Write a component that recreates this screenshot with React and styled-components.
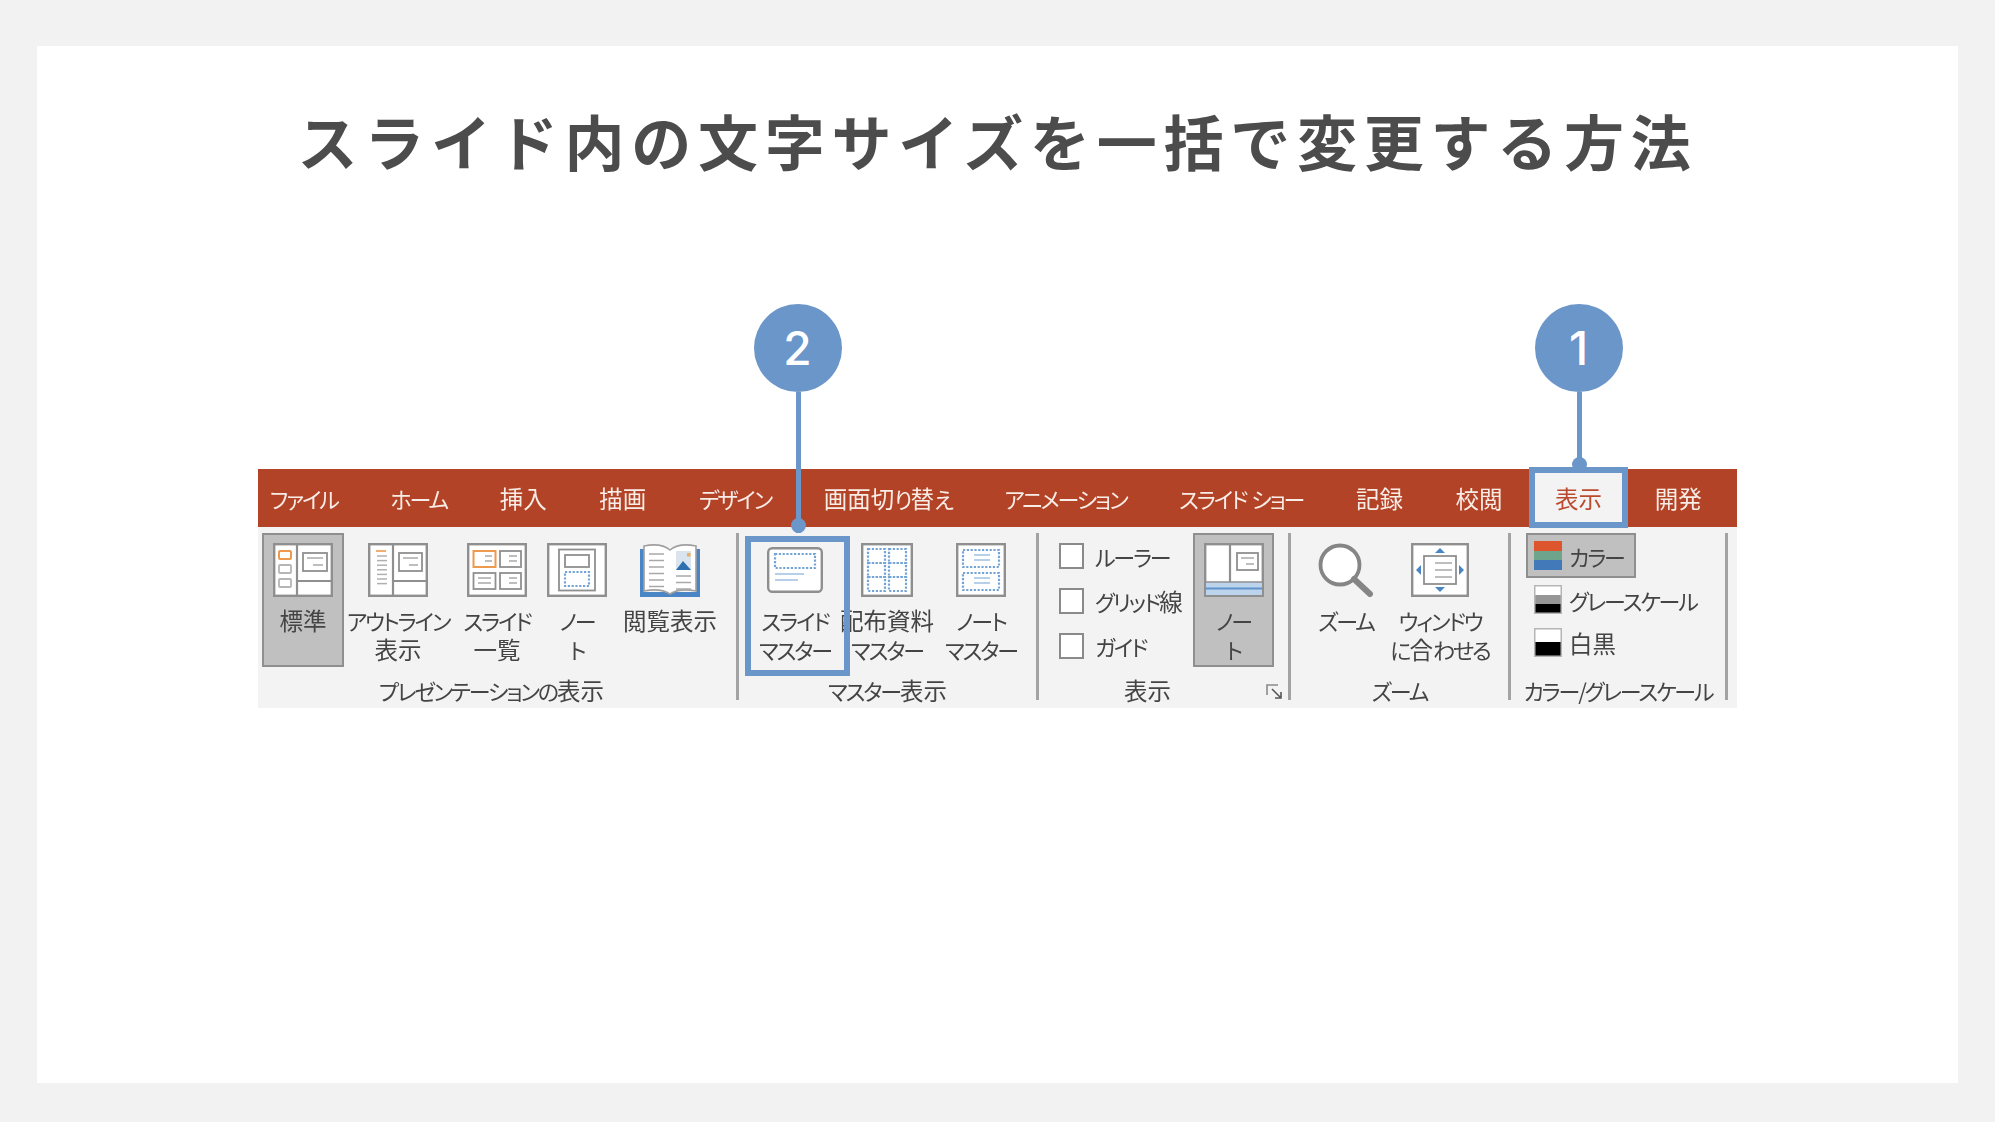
import React from "react";
import styled, { createGlobalStyle, css } from "styled-components";

const BLUE = "#6b96c9";
const GRAY = "#8f8f8f";
const DOT = "#74a4d6";

const GlobalStyle = createGlobalStyle`
  html, body { margin: 0; padding: 0; background: #f2f2f2; }
  body { font-family: "Noto Sans CJK JP", "Noto Sans", sans-serif; }
`;

const soft = css`
  filter: blur(0.45px);
`;

const Page = styled.div`
  box-sizing: border-box;
  height: 1122px;
  padding: 46px 37px 39px;
`;

const Slide = styled.div`
  height: 100%;
  background: #fff;
  padding-top: 1px;
  box-sizing: border-box;
`;

const Title = styled.h1`
  margin: 47px 0 0;
  height: 95px;
  line-height: 92px;
  text-align: center;
  font-size: 60px;
  font-weight: 700;
  letter-spacing: 6.75px;
  color: #4c4c4c;
  ${soft}
`;

const Ribbon = styled.div`
  width: 1479px;
  margin: 280px 0 0 221px;
  font-size: 22px;
  letter-spacing: -2.1px;
  color: #444;
  font-feature-settings: "palt";
`;

/* kanji run: the ribbon's kana are condensed, its kanji are not */
const Kanji = styled.span`
  font-size: 23.5px;
  letter-spacing: 0;
`;

const Jp = ({ children }) =>
  children.split(/([\u4e00-\u9fff]+)/).map((part, i) => (i % 2 ? <Kanji key={i}>{part}</Kanji> : part));

const TabBar = styled.div`
  display: flex;
  height: 58px;
  background: #b34326;
`;

const Tab = styled.div`
  position: relative;
  display: flex;
  align-items: center;
  padding: 0 26.3px;
  white-space: pre;
  word-spacing: 2px;
  color: ${(p) => (p.$active ? "#bb4a2e" : "#f8ece7")};
  background: ${(p) => (p.$active ? "#f3f3f3" : "transparent")};
  &:first-child { padding-left: 12px; }
`;

const TabText = styled.span`
  ${soft}
`;

const Body = styled.div`
  display: flex;
  height: 181px;
  background: #f3f3f3;
  padding-top: 6px;
  box-sizing: border-box;
`;

const Group = styled.section`
  position: relative;
  box-sizing: border-box;
  width: ${(p) => p.$w}px;
  height: 167px;
  padding-left: ${(p) => p.$inset}px;
  border-right: 3px solid #a3a3a3;
  display: flex;
  flex-direction: column;
`;

const Row = styled.div`
  display: flex;
  height: 134px;
`;

const Caption = styled.div`
  margin-top: auto;
  margin-bottom: -4px;
  margin-left: -${(p) => p.$inset || 0}px;
  padding-right: ${(p) => p.$shift || 0}px;
  height: 26px;
  line-height: 24px;
  text-align: center;
  white-space: nowrap;
  ${soft}
`;

const Launcher = styled.svg`
  position: absolute;
  right: 5px;
  bottom: 0;
  width: 17px;
  height: 16px;
`;

const Button = styled.div`
  position: relative;
  box-sizing: border-box;
  width: ${(p) => p.$w}px;
  height: 134px;
  padding-top: 10px;
  display: flex;
  flex-direction: column;
  align-items: center;
  ${(p) =>
    p.$on &&
    css`
      background: #c0c0c0;
      box-shadow: inset 0 0 0 2px ${GRAY};
    `}
`;

const Glyph = styled.svg`
  display: block;
  width: ${(p) => p.$w || 60}px;
  height: 54px;
  flex: none;
  ${soft}
`;

const Label = styled.div`
  margin-top: 9px;
  line-height: 29px;
  text-align: center;
  white-space: nowrap;
  ${soft}
`;

const Line = styled.div``;

const ChecksColumn = styled.div`
  box-sizing: border-box;
  width: 154px;
  padding: 0 0 0 20px;
`;

const Check = styled.div`
  display: flex;
  align-items: center;
  gap: 11px;
  height: 45px;
  white-space: nowrap;
`;

const Box = styled.span`
  box-sizing: border-box;
  width: 25px;
  height: 26px;
  background: #fff;
  border: 2px solid #8a8a8a;
`;

const OptionText = styled.span`
  ${soft}
`;

const ColorOption = styled.div`
  box-sizing: border-box;
  display: flex;
  align-items: center;
  gap: 7px;
  height: ${(p) => (p.$on ? 45 : 43)}px;
  width: ${(p) => (p.$on ? "110px" : "auto")};
  padding-left: 8px;
  white-space: nowrap;
  ${(p) =>
    p.$on &&
    css`
      background: #c0c0c0;
      box-shadow: inset 0 0 0 2px ${GRAY};
    `}
`;

const Swatch = styled.span`
  width: 28px;
  height: 29px;
  flex: none;
  background: ${(p) => p.$fill};
  ${(p) => p.$edged && "box-shadow: inset 0 0 0 1.5px #b5b5b5;"}
  ${soft}
`;

const Mark = styled.div`
  position: absolute;
  box-sizing: border-box;
  z-index: 2;
  top: ${(p) => p.$top}px;
  bottom: ${(p) => p.$bottom}px;
  left: ${(p) => p.$left}px;
  right: ${(p) => p.$right}px;
  border: 6px solid ${BLUE};
`;

const Pin = styled.div`
  position: absolute;
  left: 50%;
  bottom: calc(100% + ${(p) => p.$lift}px);
  transform: translateX(-50%);
  width: 88px;
  height: ${(p) => 88 + p.$stem}px;
  display: flex;
  flex-direction: column;
  align-items: center;
`;

const Bubble = styled.div`
  flex: none;
  width: 88px;
  height: 88px;
  border-radius: 50%;
  background: ${BLUE};
  color: #fff;
  display: flex;
  align-items: center;
  justify-content: center;
  letter-spacing: 0;
  font: 500 46px/1 Inter, "Noto Sans", sans-serif;
`;

const Stem = styled.div`
  flex: 1;
  width: 5px;
  margin-left: 2px;
  background: ${BLUE};
`;

const PinDot = styled.div`
  position: absolute;
  left: 37px;
  bottom: 0;
  width: 15px;
  height: 15px;
  border-radius: 50%;
  background: ${BLUE};
`;

const Callout = ({ n, stem, lift }) => (
  <Pin $stem={stem} $lift={lift}>
    <Bubble>{n}</Bubble>
    <Stem />
    <PinDot />
  </Pin>
);

const Shell = ({ children, w = 60, h = 54, y = 0, radius = 0 }) => (
  <Glyph $w={w} viewBox={`0 0 ${w} 54`}>
    <rect x="1.2" y={y + 1.2} width={w - 2.4} height={h - 2.4} rx={radius} fill="#fff" stroke={GRAY} strokeWidth="2.4" />
    {children}
  </Glyph>
);

const Lines = ({ x, y, w, n, gap = 4, color = "#a8a8a8" }) => (
  <g stroke={color} strokeWidth="1.5">
    {Array.from({ length: n }, (_, i) => (
      <line key={i} x1={x} x2={x + w} y1={y + i * gap} y2={y + i * gap} />
    ))}
  </g>
);

const Mini = ({ x, y, w, h, color = GRAY }) => (
  <rect x={x} y={y} width={w} height={h} fill="#fff" stroke={color} strokeWidth="1.8" />
);

const Dotted = ({ x, y, w, h }) => (
  <rect x={x} y={y} width={w} height={h} fill="none" stroke={DOT} strokeWidth="2.2" strokeDasharray="2.2 1.6" />
);

const NormalIcon = () => (
  <Shell>
    <path d="M24 1v52M24 38h36" stroke={GRAY} strokeWidth="2.2" />
    <rect x="6" y="8" width="12" height="8" rx="1" fill="#fff" stroke="#ed9a4f" strokeWidth="2" />
    <rect x="6" y="22" width="12" height="8" rx="1" fill="#fff" stroke="#b5b5b5" strokeWidth="1.8" />
    <rect x="6" y="36" width="12" height="8" rx="1" fill="#fff" stroke="#b5b5b5" strokeWidth="1.8" />
    <Mini x="30" y="10" w="24" h="18" />
    <Lines x={34} y={15} w={16} n={1} />
    <Lines x={40} y={22} w={10} n={1} />
  </Shell>
);

const OutlineIcon = () => (
  <Shell>
    <path d="M25 1v52M25 38h35" stroke={GRAY} strokeWidth="2.2" />
    <line x1="8" x2="18" y1="8" y2="8" stroke="#ed9a4f" strokeWidth="1.6" />
    <Lines x={9} y={13} w={10} n={7} gap={4.6} color="#b0b0b0" />
    <Mini x="31" y="10" w="23" h="18" />
    <Lines x={35} y={15} w={15} n={1} />
    <Lines x={41} y={22} w={9} n={1} />
  </Shell>
);

const SorterIcon = () => (
  <Shell>
    <rect x="6.5" y="8" width="22" height="16" fill="#fff" stroke="#ed9a4f" strokeWidth="2" />
    <Mini x="33" y="8" w="21" h="16" />
    <Mini x="6.5" y="30" w="22" h="16" />
    <Mini x="33" y="30" w="21" h="16" />
    <Lines x={18} y={13} w={7} n={2} gap={5} />
    <Lines x={42} y={13} w={8} n={2} gap={5} />
    <Lines x={11} y={35} w={13} n={2} gap={5} />
    <Lines x={42} y={35} w={8} n={2} gap={5} />
  </Shell>
);

const NotesIcon = () => (
  <Shell>
    <Mini x="12" y="6.5" w="36" h="41" />
    <Mini x="18" y="12" w="24" h="12" />
    <Dotted x={18} y={29} w={24} h={14} />
  </Shell>
);

const ReadingIcon = () => (
  <Glyph viewBox="0 0 60 54">
    <path d="M0 6h4v43h52V6h4v48H0z" fill="#4a86c5" />
    <path d="M4 3c10-2 20-1 26 4 6-5 16-6 26-4v45c-10-2-20-1-26 3-6-4-16-5-26-3z" fill="#fff" stroke="#a0a0a0" strokeWidth="1.6" />
    <Lines x={9} y={11} w={15} n={6} gap={6.5} />
    <Lines x={36} y={33} w={15} n={3} gap={6.5} />
    <rect x="36" y="8" width="15" height="19" fill="#d9e4ef" />
    <path d="M36 27l7-9 8 9z" fill="#2f6fb0" />
    <rect x="47" y="10" width="3.5" height="3.5" fill="#ecb060" />
  </Glyph>
);

const SlideMasterIcon = () => (
  <Shell w={56} h={46} y={4} radius={4}>
    <Dotted x={8} y={11} w={40} h={14} />
    <Lines x={8} y={31} w={29} n={1} color="#9fc0e2" />
    <Lines x={8} y={37} w={23} n={1} color="#9fc0e2" />
  </Shell>
);

const HandoutIcon = () => (
  <Shell w={52}>
    {[6, 20, 34].map((y) => (
      <g key={y}>
        <Dotted x={7} y={y} w={17} h={14} />
        <Dotted x={28} y={y} w={17} h={14} />
      </g>
    ))}
  </Shell>
);

const NotesMasterIcon = () => (
  <Shell w={50}>
    <Dotted x={7} y={7} w={36} h={17} />
    <Dotted x={7} y={30} w={36} h={17} />
    <Lines x={18} y={12} w={16} n={2} gap={5} color="#9fc0e2" />
    <Lines x={18} y={35} w={16} n={2} gap={5} color="#9fc0e2" />
  </Shell>
);

const NotePaneIcon = () => (
  <Shell>
    <path d="M26 1v38" stroke={GRAY} strokeWidth="2.2" />
    <rect x="2" y="39" width="56" height="13" fill="#bcd3ec" />
    <line x1="2" x2="58" y1="45.5" y2="45.5" stroke="#5f93cb" strokeWidth="2" />
    <line x1="1" x2="59" y1="39" y2="39" stroke={GRAY} strokeWidth="1.6" />
    <Mini x="33" y="10" w="21" h="17" />
    <Lines x={37} y={15} w={13} n={1} />
    <Lines x={42} y={21} w={8} n={1} />
  </Shell>
);

const ZoomIcon = () => (
  <Glyph $w={56} viewBox="0 0 56 54">
    <circle cx="22" cy="22" r="19.5" fill="#fff" stroke="#858585" strokeWidth="3.8" />
    <line x1="36" y1="36" x2="52" y2="51" stroke="#858585" strokeWidth="6" strokeLinecap="round" />
  </Glyph>
);

const FitIcon = () => (
  <Shell w={58}>
    <Mini x="13" y="13" w="32" h="28" />
    <Lines x={24} y={20} w={17} n={3} gap={7} />
    <g fill="#4a86c5">
      <path d="M29 5l5 5H24z" />
      <path d="M29 49l5-5H24z" />
      <path d="M5 27l5-5v10z" />
      <path d="M53 27l-5-5v10z" />
    </g>
  </Shell>
);

const tabs = ["ファイル", "ホーム", "挿入", "描画", "デザイン", "画面切り替え", "アニメーション", "スライド ショー", "記録", "校閲"];

const Two = ({ lines }) => (
  <Label>
    {lines.map((l) => (
      <Line key={l}>
        <Jp>{l}</Jp>
      </Line>
    ))}
  </Label>
);

export default function App() {
  return (
    <Page>
      <GlobalStyle />
      <Slide>
        <Title>スライド内の文字サイズを一括で変更する方法</Title>
        <Ribbon>
          <TabBar>
            {tabs.map((t) => (
              <Tab key={t}>
                <TabText>
                  <Jp>{t}</Jp>
                </TabText>
              </Tab>
            ))}
            <Tab $active>
              <TabText>
                <Jp>表示</Jp>
              </TabText>
              <Mark $top={-2} $bottom={-1} $left={0} $right={0}>
                <Callout n="1" stem={80} lift={1} />
              </Mark>
            </Tab>
            <Tab>
              <TabText>
                <Jp>開発</Jp>
              </TabText>
            </Tab>
          </TabBar>
          <Body>
            <Group $w={481} $inset={4}>
              <Row>
                <Button $w={82} $on>
                  <NormalIcon />
                  <Two lines={["標準"]} />
                </Button>
                <Button $w={108}>
                  <OutlineIcon />
                  <Two lines={["アウトライン", "表示"]} />
                </Button>
                <Button $w={90}>
                  <SorterIcon />
                  <Two lines={["スライド", "一覧"]} />
                </Button>
                <Button $w={70}>
                  <NotesIcon />
                  <Two lines={["ノー", "ト"]} />
                </Button>
                <Button $w={116}>
                  <ReadingIcon />
                  <Two lines={["閲覧表示"]} />
                </Button>
              </Row>
              <Caption $inset={4} $shift={11}>
                <Jp>プレゼンテーションの表示</Jp>
              </Caption>
            </Group>
            <Group $w={300} $inset={8}>
              <Row>
                <Button $w={96}>
                  <SlideMasterIcon />
                  <Two lines={["スライド", "マスター"]} />
                  <Mark $top={3} $bottom={-9} $left={-2} $right={-7}>
                    <Callout n="2" stem={141} lift={9} />
                  </Mark>
                </Button>
                <Button $w={88}>
                  <HandoutIcon />
                  <Two lines={["配布資料", "マスター"]} />
                </Button>
                <Button $w={100}>
                  <NotesMasterIcon />
                  <Two lines={["ノート", "マスター"]} />
                </Button>
              </Row>
              <Caption $inset={8}>
                <Jp>マスター表示</Jp>
              </Caption>
            </Group>
            <Group $w={252} $inset={0}>
              <Row>
                <ChecksColumn>
                  <Check>
                    <Box />
                    <OptionText>ルーラー</OptionText>
                  </Check>
                  <Check>
                    <Box />
                    <OptionText>
                      <Jp>グリッド線</Jp>
                    </OptionText>
                  </Check>
                  <Check>
                    <Box />
                    <OptionText>ガイド</OptionText>
                  </Check>
                </ChecksColumn>
                <Button $w={81} $on>
                  <NotePaneIcon />
                  <Two lines={["ノー", "ト"]} />
                </Button>
              </Row>
              <Caption $shift={32}>
                <Jp>表示</Jp>
              </Caption>
              <Launcher viewBox="0 0 17 16">
                <path d="M1 11V1h11" fill="none" stroke="#8a8a8a" strokeWidth="1.6" />
                <path d="M6 5l8 8M9 14h6V8" fill="none" stroke="#555" strokeWidth="1.6" />
              </Launcher>
            </Group>
            <Group $w={220} $inset={9}>
              <Row>
                <Button $w={92}>
                  <ZoomIcon />
                  <Two lines={["ズーム"]} />
                </Button>
                <Button $w={96}>
                  <FitIcon />
                  <Two lines={["ウィンドウ", "に合わせる"]} />
                </Button>
              </Row>
              <Caption $inset={9}>ズーム</Caption>
            </Group>
            <Group $w={217} $inset={15}>
              <div>
                <ColorOption $on>
                  <Swatch $fill="linear-gradient(#dc552d 0 34%, #6ea48c 34% 67%, #4279b8 67%)" />
                  <OptionText>カラー</OptionText>
                </ColorOption>
                <ColorOption>
                  <Swatch $edged $fill="linear-gradient(#fff 0 34%, #969696 34% 67%, #000 67%)" />
                  <OptionText>グレースケール</OptionText>
                </ColorOption>
                <ColorOption>
                  <Swatch $edged $fill="linear-gradient(#fff 0 50%, #000 50%)" />
                  <OptionText>
                    <Jp>白黒</Jp>
                  </OptionText>
                </ColorOption>
              </div>
              <Caption $inset={15}>カラー/グレースケール</Caption>
            </Group>
          </Body>
        </Ribbon>
      </Slide>
    </Page>
  );
}
